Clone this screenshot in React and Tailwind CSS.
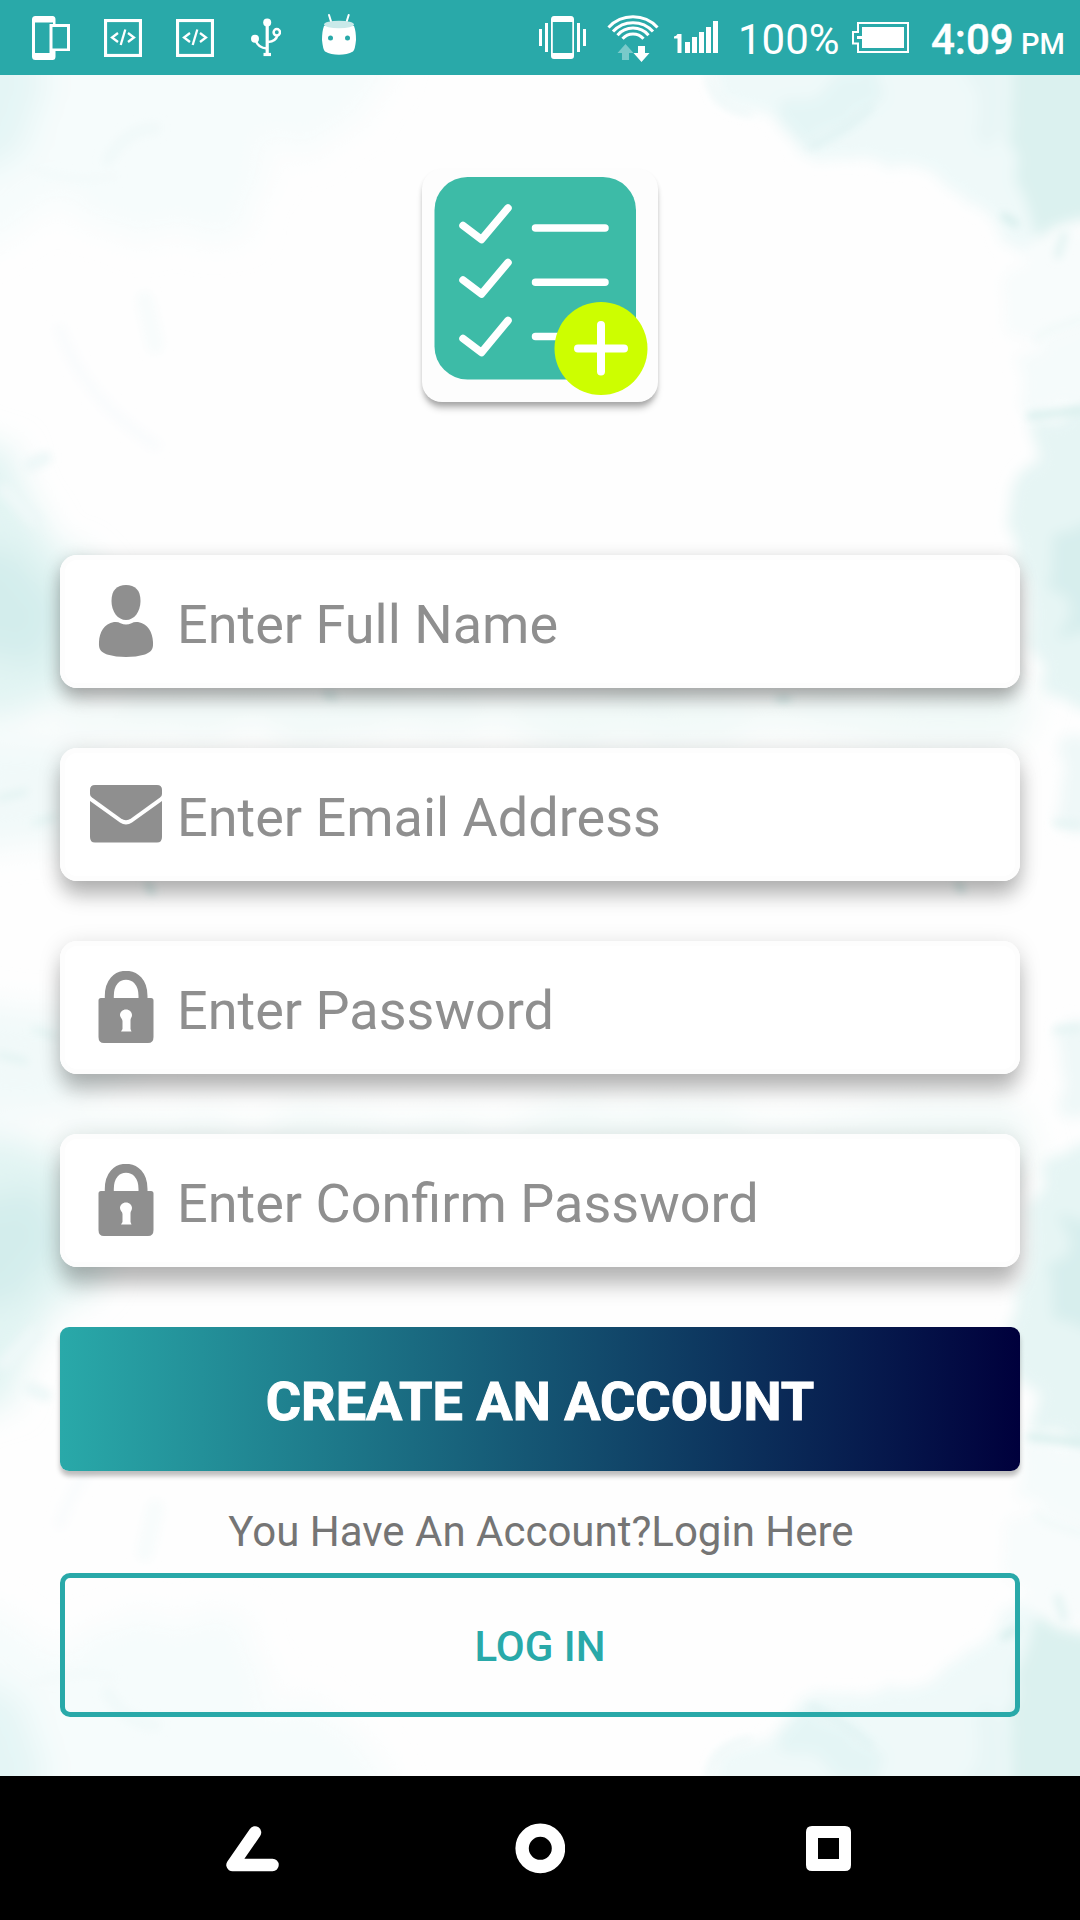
import React from "react";

const FIELD_SHADOWS = [
  "shadow-[inset_0_0_0_5px_#fdfdfd,0_14px_18px_-2px_rgba(0,0,0,0.22),0_4px_18px_rgba(0,0,0,0.20)]",
  "shadow-[inset_0_0_0_5px_#fdfdfd,0_17px_20px_-2px_rgba(0,0,0,0.22),0_4px_22px_rgba(0,0,0,0.17)]",
  "shadow-[inset_0_0_0_5px_#fdfdfd,0_19px_20px_-2px_rgba(0,0,0,0.22),0_4px_22px_rgba(0,0,0,0.15)]",
  "shadow-[inset_0_0_0_5px_#fdfdfd,0_21px_20px_-2px_rgba(0,0,0,0.22),0_4px_22px_rgba(0,0,0,0.14)]",
];

function Watercolor() {
  return (
    <svg className="absolute inset-0 -z-10" width="1080" height="1701" viewBox="0 75 1080 1701" aria-hidden="true">
      <defs>
        <filter id="soft" filterUnits="userSpaceOnUse" x="-60" y="0" width="1200" height="960">
          <feTurbulence type="fractalNoise" baseFrequency="0.014" numOctaves="3" seed="4" />
          <feDisplacementMap in="SourceGraphic" scale="60" xChannelSelector="R" yChannelSelector="G" />
          <feGaussianBlur stdDeviation="16" />
        </filter>
        <filter id="cloud" filterUnits="userSpaceOnUse" x="-60" y="0" width="1200" height="960">
          <feTurbulence type="fractalNoise" baseFrequency="0.02" numOctaves="3" seed="9" />
          <feDisplacementMap in="SourceGraphic" scale="40" xChannelSelector="R" yChannelSelector="G" />
          <feGaussianBlur stdDeviation="7" />
        </filter>
        <filter id="wisp" filterUnits="userSpaceOnUse" x="-60" y="0" width="1200" height="960">
          <feGaussianBlur stdDeviation="4" />
        </filter>
        <clipPath id="half"><rect x="0" y="75" width="1080" height="852" /></clipPath>
        <g id="wash" clipPath="url(#half)">
          <g filter="url(#soft)">
            <path d="M-50 20H400L360 120 260 150 240 230 150 250 60 200-50 260Z" fill="#f6fcfc" />
            <path d="M-50 20H36V150L10 175-50 180Z" fill="#e4f5f5" />
            <path d="M-50 430 10 450 50 510 90 560 95 650 60 700-50 730Z" fill="#e2f4f3" />
            <path d="M-50 530 20 545 50 600 40 650-50 670Z" fill="#d3edec" />
            <path d="M-50 740 50 750 150 790 50 850-50 850Z" fill="#f1f9f9" />
            <path d="M60 690H1030V735H60Z" fill="#f1f9f8" />
          </g>
          <g filter="url(#cloud)">
            <path d="M705 40 712 95 735 113 785 122 800 155 815 167 860 162 910 165 950 190 985 208 1000 240 1020 255 1045 225 1120 215V20Z" fill="#eff9f9" />
            <path d="M790 105 870 60 885 100 850 125 808 145 790 130Z" fill="#e4f5f5" />
            <path d="M1015 40H1120V215L1035 232 1018 180Z" fill="#dbf1ef" />
            <path d="M960 50H1010V140L975 145Z" fill="#e8f6f6" />
            <path d="M1000 285 1045 235 1120 240V330L1050 350 1010 315Z" fill="#f8fcfc" />
            <path d="M1015 350 1120 320V410H1028Z" fill="#f5fbfb" />
            <path d="M1026 418 1120 408V720L1050 690 1025 640 1035 560 1005 515 1040 465Z" fill="#e6f5f4" />
            <path d="M1050 530 1120 510V640L1060 630Z" fill="#d7eeed" />
            <path d="M1060 740 1120 735V840L1060 820Z" fill="#eff8f8" />
          </g>
          <g filter="url(#wisp)" fill="none" strokeLinecap="round">
            <path d="M708 78Q715 108 750 114" stroke="#ebf7f7" strokeWidth="5" />
            <path d="M812 146Q850 128 870 108" stroke="#e0f3f3" strokeWidth="7" />
            <path d="M1004 216 1016 224" stroke="#d2ecea" strokeWidth="6" />
            <path d="M1030 416 1084 410" stroke="#d6eeec" strokeWidth="7" />
            <path d="M1064 235 1058 255" stroke="#e4f4f3" strokeWidth="8" />
            <path d="M1035 340 1048 330 1084 318" stroke="#edf8f7" strokeWidth="4" />
            <path d="M30 167Q70 185 115 176" stroke="#f3fafa" strokeWidth="6" />
            <path d="M108 160Q125 130 155 128" stroke="#f1f9f9" strokeWidth="12" />
            <path d="M60 330Q85 400 155 445" stroke="#fafcfd" strokeWidth="14" />
            <path d="M145 300 155 345" stroke="#f8fcfc" strokeWidth="18" />
            <path d="M30 465 45 458M5 490 35 520" stroke="#eef8f8" strokeWidth="14" />
            <path d="M326 694 334 697M148 884 152 892M779 699H788M958 884 962 890" stroke="#cfe9e7" strokeWidth="6" />
            <path d="M0 798 25 792M35 823 55 817M1056 823 1080 825" stroke="#e2f3f2" strokeWidth="6" />
          </g>
        </g>
      </defs>
      <rect y="75" width="1080" height="1701" fill="#fefefe" />
      <use href="#wash" />
      <use href="#wash" transform="matrix(1 0 0 -1 0 1853)" />
    </svg>
  );
}

function CodeIcon({ className }) {
  return (
    <svg className={className} width="38" height="38" viewBox="0 0 38 38" fill="none" stroke="#fff">
      <rect x="1.5" y="1.5" width="35" height="35" strokeWidth="3.2" />
      <path d="M14 14 8 18.500 14 23M24 14 30 18.500 24 23" strokeWidth="2.300" />
      <path d="M21.300 10.500 16.700 26" strokeWidth="2.300" />
    </svg>
  );
}

function StatusBar() {
  return (
    <header className="flex h-[75px] items-center justify-between bg-[#29a9a9] pr-[15px] pl-8 text-white">
      <div className="flex h-full items-center">
        <svg width="38" height="75" viewBox="32 0 38 75" fill="#fff">
          <path fillRule="evenodd" d="M35.500 16H52.500Q55.500 16 55.500 19.500V24H70V51H55.500V56.500Q55.500 60 52.500 60H35.500Q32 60 32 56.500V19.500Q32 16 35.500 16ZM35 22.500V53H49.500V24H53V22.500ZM52.500 27V48.500H67V27Z" />
        </svg>
        <CodeIcon className="ml-[34px]" />
        <CodeIcon className="ml-[34px]" />
        <svg className="ml-[37px]" width="30" height="75" viewBox="251 0 30 75" fill="none" stroke="#fff" strokeWidth="2.500">
          <circle cx="267.200" cy="22.500" r="4" fill="#fff" stroke="none" />
          <circle cx="255" cy="38.700" r="4" fill="#fff" stroke="none" />
          <circle cx="276.800" cy="32.300" r="3.200" />
          <path d="M267.200 24V54" strokeWidth="3.200" />
          <path d="M263.500 54.500H271" strokeWidth="3.200" />
          <path d="M255.500 40Q258 48 267 48.500M277.500 35Q276 41.500 268 42" />
        </svg>
        <svg className="ml-[41px]" width="34" height="75" viewBox="322 0 34 75">
          <path d="M329 15 331.500 23M348.700 15 346.200 23" stroke="#fff" strokeWidth="2" strokeLinecap="round" />
          <path d="M324 26Q322 31 322 40 323 50 325 51.500 331 54.800 339 54.800 347 54.800 353 51.500 355 50 356 40 356 31 354 26Z" fill="#fff" />
          <ellipse cx="339" cy="24.500" rx="15" ry="3.800" fill="#c9e9e9" />
          <circle cx="330.500" cy="38" r="2.500" fill="#29a9a9" />
          <circle cx="347.500" cy="38" r="2.500" fill="#29a9a9" />
        </svg>
      </div>
      <div className="flex h-full items-center">
        <svg width="47" height="75" viewBox="539 0 47 75" fill="#fff">
          <path fillRule="evenodd" d="M554 16H571Q574 16 574 19.500V56Q574 59 571 59H554Q551 59 551 56V19.500Q551 16 554 16ZM552.800 22V53H572.300V22Z" />
          <path d="M539 29H542V46H539ZM545 23H548V52H545ZM577 23H580V52H577ZM583 29H586V46H583Z" />
        </svg>
        <svg className="ml-[21px]" width="52" height="75" viewBox="607 0 52 75" fill="none" stroke="#fff" strokeWidth="3">
          <path d="M608.500 27.500A33.500 33.500 0 0 1 657.500 27.500M613 31.500A27 27 0 0 1 653 31.500M617.500 35.200A20.500 20.500 0 0 1 648.500 35.200M622.500 38.700A14 14 0 0 1 643.500 38.700" />
          <path d="M617.500 53 625.500 44 633.500 53H629V60H622V53Z" fill="#79caca" stroke="none" />
          <path d="M633.500 53H638V46H645V53H649.500L641.500 62Z" fill="#fff" stroke="none" />
        </svg>
        <svg className="ml-[14px]" width="45" height="75" viewBox="673 0 45 75" fill="#fff">
          <path d="M677.500 34H681.500V53H677.500V38.500H674V36.500Q676.500 36 677.500 34ZM685 42H690V53H685ZM692 37H697V53H692ZM699 32H704V53H699ZM706 27H711V53H706ZM713 21H718V53H713Z" />
        </svg>
        <span className="ml-[20px] w-[101px] pt-[4px] text-[42px] leading-[49px] whitespace-nowrap">100%</span>
        <svg className="ml-[13px]" width="57" height="75" viewBox="852 0 57 75">
          <path d="M858 23H908V52H858V43.500H853V32H858Z" fill="none" stroke="#fff" strokeWidth="2" />
          <path d="M862 27H904V48H862V39H857V36H862Z" fill="#fff" />
        </svg>
        <div className="ml-[22px] flex items-baseline pt-[6px] font-medium whitespace-nowrap">
          <span className="w-[90px] text-[42px] leading-[49px] [-webkit-text-stroke:0.4px_white]">4:09</span>
          <span className="w-[44px] text-[29px]">PM</span>
        </div>
      </div>
    </header>
  );
}

function Logo() {
  return (
    <div className="h-[233px] w-[236px] rounded-[20px] bg-[#fdfdfd] shadow-[0_8px_7px_-2px_rgba(0,0,0,0.26),0_3px_4px_rgba(0,0,0,0.12)]">
      <svg width="236" height="233" viewBox="422 169 236 233" fill="none" stroke="#fff" strokeLinecap="round" strokeLinejoin="round">
        <rect x="434.500" y="177" width="201.500" height="202.500" rx="33" fill="#3dbba7" stroke="none" />
        <path d="M463 225.500 481.500 239.500 508 208M463 280 481.500 294 508 262.500M463 338.500 481.500 352.500 508 320.500" strokeWidth="7.500" />
        <path d="M535.500 228H605M535.500 282.300H605M535.500 336.500H560" strokeWidth="7.500" />
        <circle cx="601" cy="348.500" r="46.500" fill="#cdfe00" stroke="none" />
        <path d="M578 348.500H624M601 325V371.500" strokeWidth="8" />
      </svg>
    </div>
  );
}

function PersonIcon() {
  return (
    <svg width="72" height="72" viewBox="0 0 72 72" fill="#8f8f8f">
      <path d="M36 0C45 0 50.500 5 50.500 16 50.500 27 44 35 36 35 28 35 21.500 27 21.500 16 21.500 5 27 0 36 0Z" />
      <path d="M24 37Q28 36.500 30.500 38.200 36 41 41.500 38.200 44 36.500 48 37C58 39 62.500 47 63 57 63.500 65 61 67 55 69.500Q46 72 36 72 26 72 17 69.500C11 67 8.500 65 9 57 9.500 47 14 39 24 37Z" />
    </svg>
  );
}

function MailIcon() {
  return (
    <svg width="72" height="72" viewBox="0 0 72 72" fill="#8f8f8f">
      <path d="M5 7H67Q72 7 72 12V16Q72 18 70 19.500L41 40.500Q36 44 31 40.500L2 19.500Q0 18 0 16V12Q0 7 5 7Z" />
      <path d="M0 23 30 44.500Q36 48.500 42 44.500L72 23V59Q72 64.500 67 64.500H5Q0 64.500 0 59Z" />
    </svg>
  );
}

function LockIcon() {
  return (
    <svg width="72" height="72" viewBox="0 0 72 72">
      <path d="M19.300 28V25C19.300 11 27 4.300 36 4.300S53 11 53 25V28" fill="none" stroke="#8f8f8f" strokeWidth="9" />
      <path fillRule="evenodd" d="M11 27H61Q63.500 27 63.500 29.500V66Q63.500 72 58 72H14Q8.500 72 8.500 66V29.500Q8.500 27 11 27ZM36 38.500C32.500 38.500 30 41 30 44 30 46.500 32.500 48 32.500 50V58L31 60.500H41.500L40.500 58V49C40.500 47 42 46.500 42 44 42 41 39.500 38.500 36 38.500Z" fill="#8f8f8f" />
    </svg>
  );
}

function Field({ icon, label, shadow }) {
  return (
    <div className={`flex h-[133px] items-start rounded-[17px] bg-white pt-[30px] pl-[30px] ${shadow}`}>
      {icon}
      <span className="ml-[15px] mt-[8px] text-[54px] leading-[64px] whitespace-nowrap text-[#8f8f8f]">{label}</span>
    </div>
  );
}

function NavBar() {
  return (
    <nav className="flex h-[144px] items-center bg-black pl-[226px]">
      <svg width="53" height="144" viewBox="226 1776 53 144" fill="none" stroke="#fff" strokeWidth="12.500" strokeLinecap="round" strokeLinejoin="round">
        <path d="M255 1832.500 232.500 1865H272.500" />
      </svg>
      <svg className="ml-[236px]" width="50" height="144" viewBox="515 1776 50 144" fill="none">
        <circle cx="540.300" cy="1848.300" r="18.200" stroke="#fff" strokeWidth="13.400" />
      </svg>
      <svg className="ml-[241px]" width="45" height="144" viewBox="806 1776 45 144">
        <path fillRule="evenodd" d="M812 1826H845Q851 1826 851 1832V1865Q851 1871 845 1871H812Q806 1871 806 1865V1832Q806 1826 812 1826ZM818 1838V1859H839V1838Z" fill="#fff" />
      </svg>
    </nav>
  );
}

export default function App() {
  return (
    <div className="flex h-[1920px] w-[1080px] flex-col overflow-hidden font-['Roboto',sans-serif]">
      <StatusBar />
      <main className="relative isolate flex h-[1701px] flex-col items-center overflow-hidden px-[60px] pt-[94px]">
        <Watercolor />
        <Logo />
        <div className="mt-[153px] flex w-full flex-col gap-[60px]">
          <Field icon={<PersonIcon />} label="Enter Full Name" shadow={FIELD_SHADOWS[0]} />
          <Field icon={<MailIcon />} label="Enter Email Address" shadow={FIELD_SHADOWS[1]} />
          <Field icon={<LockIcon />} label="Enter Password" shadow={FIELD_SHADOWS[2]} />
          <Field icon={<LockIcon />} label="Enter Confirm Password" shadow={FIELD_SHADOWS[3]} />
          <button className="h-[144px] w-full rounded-[9px] bg-[linear-gradient(90deg,#29a9a9,#00003c)] pt-[4px] text-[54px] font-bold text-white shadow-[0_5px_5px_rgba(0,0,0,0.26)] [-webkit-text-stroke:1px_white]">
            CREATE AN ACCOUNT
          </button>
        </div>
        <p className="mt-[36px] pl-[2px] text-[42px] leading-[49px] whitespace-nowrap text-[#757575]">You Have An Account?Login Here</p>
        <button className="mt-[17px] h-[144px] w-full rounded-[10px] border-[5px] border-[#29a9a9] pt-[3px] text-[42px] font-medium text-[#29a9a9]">
          LOG IN
        </button>
      </main>
      <NavBar />
    </div>
  );
}
